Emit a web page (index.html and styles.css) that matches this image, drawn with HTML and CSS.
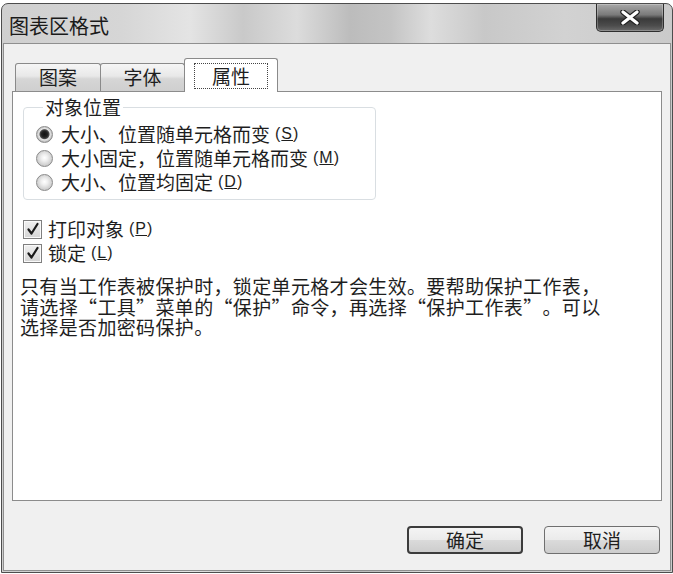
FILE: index.html
```html
<!DOCTYPE html>
<html lang="zh-CN">
<head>
<meta charset="utf-8">
<title>图表区格式</title>
<link rel="stylesheet" href="styles.css">
</head>
<body>
<div class="window">
  <div class="titlebar">
    <span class="title">图表区格式</span>
    <button class="close" aria-label="关闭">
      <svg width="20" height="15" viewBox="0 0 20 15">
        <path d="M3 2 L17 13 M17 2 L3 13" stroke="#222" stroke-width="5.5" stroke-linecap="round"/>
        <path d="M3 2 L17 13 M17 2 L3 13" stroke="#fff" stroke-width="3.2" stroke-linecap="round"/>
      </svg>
    </button>
  </div>
  <div class="client">
    <div class="tabs">
      <div class="tab">图案</div>
      <div class="tab">字体</div>
      <div class="tab active"><span class="focus">属性</span></div>
    </div>
    <div class="panel">
      <fieldset class="group">
        <legend>对象位置</legend>
        <div class="opt"><span class="radio checked"></span>大小、位置随单元格而变<span class="acc">(<u>S</u>)</span></div>
        <div class="opt"><span class="radio"></span>大小固定，位置随单元格而变<span class="acc">(<u>M</u>)</span></div>
        <div class="opt"><span class="radio"></span>大小、位置均固定<span class="acc">(<u>D</u>)</span></div>
      </fieldset>
      <div class="checks">
        <div class="opt"><span class="check"><svg width="14" height="14" viewBox="0 0 14 14"><path d="M2.5 7.5 L5.5 11.5 L11.5 2" fill="none" stroke="#1a1a1a" stroke-width="2.2" stroke-linecap="round" stroke-linejoin="round"/></svg></span>打印对象<span class="acc">(<u>P</u>)</span></div>
        <div class="opt"><span class="check"><svg width="14" height="14" viewBox="0 0 14 14"><path d="M2.5 7.5 L5.5 11.5 L11.5 2" fill="none" stroke="#1a1a1a" stroke-width="2.2" stroke-linecap="round" stroke-linejoin="round"/></svg></span>锁定<span class="acc">(<u>L</u>)</span></div>
      </div>
      <p class="note">只有当工作表被保护时，锁定单元格才会生效。要帮助保护工作表，<br>请选择<span class="ql">“</span>工具<span class="qr">”</span>菜单的<span class="ql">“</span>保护<span class="qr">”</span>命令，再选择<span class="ql">“</span>保护工作表<span class="qr">”</span>。可以<br>选择是否加密码保护。</p>
    </div>
    <div class="buttons">
      <button class="btn default">确定</button>
      <button class="btn">取消</button>
    </div>
  </div>
</div>
</body>
</html>
```

FILE: styles.css
```css
* { box-sizing: border-box; }
html, body { margin: 0; padding: 0; background: #fff; }
body {
  font-family: "Noto Sans CJK SC", "Noto Sans", sans-serif;
  color: #1e1e1e;
  width: 673px;
  height: 574px;
  overflow: hidden;
}
.window {
  margin: 3px 0 0 1px;
  width: 672px;
  height: 570px;
  border: 1px solid #4d4d4d;
  border-radius: 7px 7px 0 0;
  display: flex;
  flex-direction: column;
  background: linear-gradient(to right, #cfcfcf 0%, #d6d6d6 18%, #e4e4e4 28%, #c9c9c9 36%, #dcdcdc 44%, #bcbcbc 52%, #c4c4c4 58%, #dddddd 64%, #c8c8c8 72%, #d2d2d2 84%, #cacaca 100%);
  overflow: hidden;
}
.titlebar {
  height: 39px;
  flex: none;
  display: flex;
  align-items: flex-start;
  padding-left: 7px;
}
.title {
  font-size: 20px;
  line-height: 22px;
  margin-top: 11px;
  color: #1a1a1a;
}
.close {
  margin-left: auto;
  margin-right: 8px;
  width: 68px;
  height: 28px;
  border: 1px solid #2e2e2e;
  border-top: none;
  border-radius: 0 0 5px 5px;
  background: linear-gradient(to bottom, #a8a8a8 0%, #7a7a7a 40%, #3a3a3a 55%, #4c4c4c 80%, #6a6a6a 100%);
  box-shadow: inset 0 0 0 1px rgba(255,255,255,0.25);
  display: flex;
  align-items: center;
  justify-content: center;
  padding: 0;
}
.close svg { display: block; }
.client {
  flex: 1;
  margin: 0 1px 1px 1px;
  border: 1px solid #8f8f8f;
  background: #f0f0f0;
  display: flex;
  flex-direction: column;
}
.tabs {
  display: flex;
  align-items: flex-end;
  margin-left: 11px;
  padding-top: 14px;
  height: 47px;
}
.tab {
  height: 28px;
  width: 86px;
  border: 1px solid #8a8a8a;
  border-bottom: none;
  border-radius: 3px 3px 0 0;
  background: linear-gradient(to bottom, #f6f6f6 0%, #e8e8e8 45%, #d6d6d6 55%, #cfcfcf 100%);
  font-size: 19px;
  line-height: 26px;
  text-align: center;
}
.tab + .tab { margin-left: -1px; width: 85px; }
.tab.active {
  width: 94px;
  height: 34px;
  margin-bottom: -1px;
  background: #fff;
  position: relative;
  z-index: 1;
  padding-top: 4px;
}
.focus {
  display: block;
  margin: 0 9px;
  height: 26px;
  line-height: 24px;
  border: 1px dotted #444;
}
.panel {
  margin: 0 8px;
  height: 410px;
  border: 1px solid #8c8c8c;
  background: #fff;
  padding: 0;
}
.group {
  margin: 5px 0 0 10px;
  width: 353px;
  height: 103px;
  padding: 5px 0 0 12px;
  border: 1px solid #d9dee2;
  border-radius: 4px;
}
.group legend {
  font-size: 19px;
  line-height: 20px;
  padding: 0 2px;
  margin-left: 7px;
}
.opt {
  display: flex;
  align-items: center;
  height: 24px;
  font-size: 19px;
  line-height: 24px;
  white-space: nowrap;
}
.radio {
  width: 17px;
  height: 17px;
  border-radius: 50%;
  border: 1px solid #8a8a8a;
  background: radial-gradient(circle at 50% 45%, #ffffff 0%, #eeeeee 30%, #c8c8c8 75%, #b0b0b0 100%);
  margin-right: 8px;
  flex: none;
}
.radio.checked {
  background: radial-gradient(circle at 50% 48%, #111 0px, #222 3px, #4a4a4a 4.5px, #e6e6e6 5.5px, #cccccc 7px, #b0b0b0 8px);
}
.acc {
  font-family: "Liberation Sans", sans-serif;
  font-size: 16px;
  letter-spacing: 1px;
  margin-left: 5px;
}
.checks {
  margin: 17px 0 0 10px;
}
.check {
  width: 19px;
  height: 19px;
  border: 1px solid #7f7f7f;
  background: linear-gradient(to bottom, #f0f0f0, #d4d4d4);
  box-shadow: inset 0 0 0 1px #fafafa;
  margin-right: 6px;
  display: flex;
  align-items: center;
  justify-content: center;
  flex: none;
}
.check svg { display: block; }
.note {
  margin: 11px 0 0 7px;
  font-size: 19px;
  line-height: 20.5px;
  letter-spacing: 0.35px;
  white-space: nowrap;
}
.ql, .qr {
  display: inline-block;
  width: 19.35px;
}
.ql { text-align: right; }
.qr { text-align: left; }
.buttons {
  display: flex;
  justify-content: flex-end;
  gap: 21px;
  padding: 25px 10px 0 0;
}
.btn {
  width: 116px;
  height: 28px;
  border: 1px solid #6f6f6f;
  border-radius: 4px;
  background: linear-gradient(to bottom, #f4f4f4 0%, #ebebeb 48%, #dadada 52%, #cdcdcd 100%);
  font-family: "Noto Sans CJK SC", sans-serif;
  font-size: 19px;
  line-height: 24px;
  color: #1e1e1e;
  padding: 0;
}
.btn.default {
  border: 2px solid #3c3c3c;
}
```
